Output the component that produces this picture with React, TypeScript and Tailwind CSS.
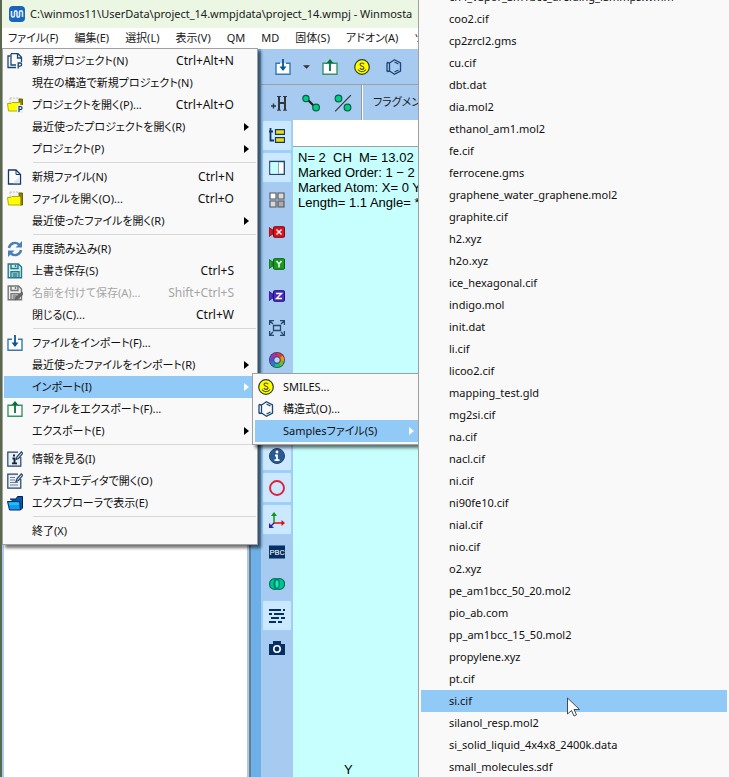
import { ReactNode } from "react"

interface MenuEntry {
  label: string
  shortcut?: string
  icon?: ReactNode
  submenu?: boolean
  disabled?: boolean
  active?: boolean
}

const FolderIcon = ({ badge }: { badge?: boolean }) => (
  <svg viewBox="0 0 16 16" className="size-4">
    <path d="M3 1h9v7H3z" fill="#f4f4f4" stroke="#aaa" strokeWidth=".7" strokeDasharray="2 1" />
    <path d="M12 2h3.500v12H13z" fill="#8a8200" stroke="#6b6400" />
    <path d="M.5 6.500H4L5 5.500h7.500l1 1V14H1.500z" fill="#ffff00" stroke="#b5aa00" />
    {badge && (
      <>
        <path d="M10 8h6v8h-6z" fill="#e8f0fa" />
        <path d="M12 15V9.500h1.500a1.500 1.500 0 0 1 0 3H12" fill="none" stroke="#153a70" strokeWidth="1.200" />
      </>
    )}
  </svg>
)

const NewProjectIcon = () => (
  <svg viewBox="0 0 16 16" className="size-4" fill="none" stroke="#1d4576" strokeWidth="1.300">
    <path d="M3.500 3H1v11.500h8" />
    <path d="M4 .700h7l3.500 3.500v5M4 .700V12h5M10.500 1v4h4" fill="#fff" />
    <path d="M11.200 15.500v-5.500h1.800a1.600 1.600 0 0 1 0 3.200h-1.800" />
  </svg>
)

const NewFileIcon = () => (
  <svg viewBox="0 0 16 16" className="size-4">
    <path d="M1.500 1H9l4.500 4.500V15h-12z" fill="#fff" stroke="#143968" strokeWidth="1.300" />
    <path d="M6 14.300h7V7z" fill="#dce6f2" />
    <path d="M9 1v4.500h4.500" fill="none" stroke="#143968" />
  </svg>
)

const ReloadIcon = () => (
  <svg viewBox="0 0 16 16" className="size-4">
    <path d="M2 7a6 6 0 0 1 10-3.500M14 9a6 6 0 0 1-10 3.500" fill="none" stroke="#4a80b5" strokeWidth="2.400" />
    <path d="M15 0v6.500H8.500zM1 16V9.500h6.500z" fill="#4a80b5" />
  </svg>
)

const SaveIcon = ({ edit }: { edit?: boolean }) => (
  <svg viewBox="0 0 16 16" className="size-4" fill="none" stroke={edit ? "#777" : "#247a87"} strokeWidth="1.400">
    <path d="M1.200 1h10.300l3 3v10.800H1.200z" fill={edit ? "#eee" : "#d3edef"} />
    <path d="M4 1v4.500h7V1M8.500 2v2M4 15V8.800h8V15M5.500 11h5M5.500 13h5" />
    {edit && <path d="m8 15 1-3 6-5 1.500 2-6 5z" fill="#666" stroke="#555" strokeWidth=".6" />}
  </svg>
)

const ImportIcon = () => (
  <svg viewBox="0 0 16 16" className="size-4" fill="none" strokeWidth="1.400">
    <path d="M5 4.200H1v11h14v-11h-4" stroke="#347bad" fill="#fff" />
    <path d="M8 0v10" stroke="#075799" strokeWidth="1.800" />
    <path d="M4.500 7.500h7L8 12z" fill="#075799" />
  </svg>
)

const ExportIcon = () => (
  <svg viewBox="0 0 16 16" className="size-4" fill="none" strokeWidth="1.400">
    <path d="M5 4.200H1v11h14v-11h-4" stroke="#379466" fill="#fff" />
    <path d="M8 12V3" stroke="#007437" strokeWidth="1.800" />
    <path d="M4 4.800h8L8 0z" fill="#007437" />
  </svg>
)

const NoteIcon = ({ info }: { info?: boolean }) => (
  <svg viewBox="0 0 16 16" className="size-4" fill="none" stroke="#254566" strokeWidth="1.200">
    <path d="M11 1.200H.800v14h13V6" fill="#e8eef4" />
    {info ? (
      <path d="M5.500 7.500h2v4.500M5 12.300h5M6 4.500h2" strokeWidth="1.800" stroke="#10243b" />
    ) : (
      <path d="M3 4.500h5M3 7h5M3 9.500h8M3 12h8" stroke="#6f8398" />
    )}
    <path d="m9 8.500 1-2.700L14.300.800l1.500 1.500L11.500 7.500z" fill="#d7e2ec" />
  </svg>
)

const ExplorerIcon = () => (
  <svg viewBox="0 0 16 16" className="size-4">
    <path d="M3 4h6l1.500-2.500h5V13l-2 2" fill="#0757a5" stroke="#001b61" />
    <path d="M.500 6.500h12l1 8.500H2.500z" fill="#1598e8" stroke="#00256c" />
    <path d="M2 7.500h10l.3 2.500H2.500z" fill="#18c3f5" />
  </svg>
)

const SmilesIcon = () => (
  <svg viewBox="0 0 16 16" className="size-4">
    <circle cx="8" cy="8" r="7.300" fill="#ffff00" stroke="#34412b" strokeWidth="1.200" />
    <path
      d="M10 5.200C9.400 3.500 6 3.600 6 5.500c0 2 4 1.400 4 3.500 0 1.800-3.500 1.800-4 0M4 10.500c2 3 6 3 8 0"
      fill="none"
      stroke="#4a4a10"
      strokeWidth="1.100"
    />
  </svg>
)

const StructureIcon = () => (
  <svg viewBox="0 0 16 16" className="size-4" fill="none" stroke="#1d4576" strokeWidth="1.300">
    <path d="M8.500.800 14.500 4v8l-6 3.200-5-3.200V4zM8.500 3l4 2M12.500 11l-4 2M1 3.500v9M3.500 4 1 3.500M3.500 12 1 12.500" />
  </svg>
)

const AddHydrogenIcon = () => (
  <svg viewBox="0 0 18 18" className="size-[18px]" fill="none" stroke="#303640">
    <path d="M1 12h5M3.500 9.500v5" strokeWidth="1.400" />
    <path d="M9 2.500v13.500M15 2.500v13.500M9 9h6" strokeWidth="2" />
    <path d="M7 2.500h4M13 2.500h4M7 16.200h4M13 16.200h4" />
  </svg>
)

const BondIcon = () => (
  <svg viewBox="0 0 16 16" className="size-[18px]" stroke="#075c45">
    <path d="m4 4 8 8" stroke="#222" strokeWidth="2" />
    <circle cx="3.500" cy="4" r="2.800" fill="#00cc84" />
    <circle cx="12.500" cy="12" r="3" fill="#00cc84" />
  </svg>
)

const CutBondIcon = () => (
  <svg viewBox="0 0 16 16" className="size-[18px]" stroke="#075c45">
    <path d="M15 1 1 15.500" stroke="#333" />
    <circle cx="4" cy="4" r="3" fill="#00cc84" />
    <circle cx="12" cy="12" r="3" fill="#00cc84" />
  </svg>
)

const TreeIcon = () => (
  <svg viewBox="0 0 16 16" className="size-4">
    <path d="M0 3.500h4M1.500 0v12.500H5" fill="none" stroke="#123763" strokeWidth="1.800" />
    <path d="M6.500 1.700h9v4.600h-9zM6.500 9.700h9v4.600h-9z" fill="#eddf16" stroke="#123763" strokeWidth="1.200" />
  </svg>
)

const PanelIcon = () => (
  <svg viewBox="0 0 16 16" className="size-4">
    <path d="M.800 1.500h14.500v12.800H.800z" fill="#fff" stroke="#214566" strokeWidth="1.300" />
    <path d="M1.500 2.300H9v11.200H1.500z" fill="#c6fffb" />
    <path d="M9.500 2v12" stroke="#8aa6be" />
  </svg>
)

const GridIcon = () => (
  <svg viewBox="0 0 16 16" className="size-4" stroke="#555" strokeWidth="1.100">
    <path d="M1 1h6v6H1z" fill="#fff" />
    <path d="M9 1h6v6H9zM1 9h6v6H1z" fill="#d9d9d9" />
    <path d="M9 9h6v6H9z" fill="#aaa" />
  </svg>
)

const AxisCamera = ({ color, dark, mark }: { color: string; dark: string; mark: string }) => (
  <svg viewBox="0 0 16 16" className="size-4">
    <path d="M0 3.500 4 6v4l-4 2.500z" fill={color} stroke={dark} strokeWidth=".7" />
    <rect x="4.500" y="2.700" width="11" height="10.600" rx="1" fill={color} stroke={dark} />
    <path d={mark} fill="none" stroke="#fff" strokeWidth="1.400" />
  </svg>
)

const FitIcon = () => (
  <svg viewBox="0 0 16 16" className="size-4" fill="none" stroke="#23476e" strokeWidth="1.300">
    <path d="M4.500 5.500h7v5h-7zM.600 5V.600H5M11 .600h4.400V5M15.400 11v4.400H11M5 15.400H.600V11M1 1l3 3M15 1l-3 3M15 15l-3-3M1 15l3-3" />
  </svg>
)

const ringColors = ["#ff3020", "#ff8a18", "#55c925", "#17bd78", "#277bd5", "#7441d2", "#bd2aa8"]

const ColorRingIcon = () => (
  <svg viewBox="0 0 16 16" className="size-4">
    <circle cx="8" cy="8" r="8" fill="#304365" />
    {ringColors.map((color, i) => (
      <circle
        key={color}
        cx="8"
        cy="8"
        r="5.400"
        fill="none"
        stroke={color}
        strokeWidth="3.600"
        pathLength="7"
        strokeDasharray="1 6"
        strokeDashoffset={-i}
        transform="rotate(-90 8 8)"
      />
    ))}
    <circle cx="8" cy="8" r="3.300" fill="#b8d4f4" stroke="#304365" />
  </svg>
)

const InfoIcon = () => (
  <svg viewBox="0 0 16 16" className="size-4">
    <circle cx="8" cy="8" r="7.500" fill="#285b94" stroke="#234266" />
    <circle cx="8" cy="4" r="1.400" fill="#fff" />
    <path d="M6 7.500h2v4.500M5.500 12.200h5" fill="none" stroke="#fff" strokeWidth="1.800" />
  </svg>
)

const CircleIcon = () => (
  <svg viewBox="0 0 16 16" className="size-4">
    <circle cx="8" cy="8" r="7" fill="none" stroke="#df2036" strokeWidth="1.900" />
  </svg>
)

const AxesIcon = () => (
  <svg viewBox="0 0 16 16" className="size-4" strokeWidth="1.500">
    <path d="M5 11V2" stroke="#129515" />
    <path d="M2 4h6L5 0z" fill="#129515" />
    <path d="M5 11h9" stroke="#e40b0b" />
    <path d="M12.500 8v6l3.500-3z" fill="#e40b0b" />
    <path d="m5 11-3.500 3.500" stroke="#3720a9" />
    <path d="M0 11v5h5z" fill="#3720a9" />
  </svg>
)

const PbcIcon = () => (
  <svg viewBox="0 0 16 16" className="size-4">
    <path d="M0 1.500h16v13H0z" fill="#052f63" />
    <text x="8" y="11" textAnchor="middle" fontSize="8" fontFamily="Roboto" fill="#fff">
      PBC
    </text>
  </svg>
)

const OverlapIcon = () => (
  <svg viewBox="0 0 16 16" className="size-4" stroke="#087060" strokeWidth="1.200">
    <rect x=".6" y="2.600" width="10.500" height="10.800" rx="5" fill="#00c786" />
    <rect x="5" y="2.600" width="10.500" height="10.800" rx="5" fill="#00c786" />
    <ellipse cx="8" cy="8" rx="2.300" ry="4.300" fill="#00edc5" />
  </svg>
)

const LinesIcon = () => (
  <svg viewBox="0 0 16 16" className="size-4" stroke="#052f63" strokeWidth="2">
    <path d="M0 2h12M14 2h2M0 6h3M5 6h10M2 10h8M12 10h4M0 14h7M9 14h4" />
  </svg>
)

const CameraIcon = () => (
  <svg viewBox="0 0 16 16" className="size-4">
    <path d="M0 4h4V1h8v3h4v11H0z" fill="#052f63" />
    <circle cx="8" cy="9" r="3.200" fill="none" stroke="#fff" strokeWidth="1.600" />
  </svg>
)

const fileMenu: MenuEntry[][] = [
  [
    { label: "新規プロジェクト(N)", shortcut: "Ctrl+Alt+N", icon: <NewProjectIcon /> },
    { label: "現在の構造で新規プロジェクト(N)" },
    { label: "プロジェクトを開く(P)...", shortcut: "Ctrl+Alt+O", icon: <FolderIcon badge /> },
    { label: "最近使ったプロジェクトを開く(R)", submenu: true },
    { label: "プロジェクト(P)", submenu: true },
  ],
  [
    { label: "新規ファイル(N)", shortcut: "Ctrl+N", icon: <NewFileIcon /> },
    { label: "ファイルを開く(O)...", shortcut: "Ctrl+O", icon: <FolderIcon /> },
    { label: "最近使ったファイルを開く(R)", submenu: true },
  ],
  [
    { label: "再度読み込み(R)", icon: <ReloadIcon /> },
    { label: "上書き保存(S)", shortcut: "Ctrl+S", icon: <SaveIcon /> },
    { label: "名前を付けて保存(A)...", shortcut: "Shift+Ctrl+S", icon: <SaveIcon edit />, disabled: true },
    { label: "閉じる(C)...", shortcut: "Ctrl+W" },
  ],
  [
    { label: "ファイルをインポート(F)...", icon: <ImportIcon /> },
    { label: "最近使ったファイルをインポート(R)", submenu: true },
    { label: "インポート(I)", submenu: true, active: true },
    { label: "ファイルをエクスポート(F)...", icon: <ExportIcon /> },
    { label: "エクスポート(E)", submenu: true },
  ],
  [
    { label: "情報を見る(I)", icon: <NoteIcon info /> },
    { label: "テキストエディタで開く(O)", icon: <NoteIcon /> },
    { label: "エクスプローラで表示(E)", icon: <ExplorerIcon /> },
  ],
  [{ label: "終了(X)" }],
]

const importMenu: MenuEntry[] = [
  { label: "SMILES...", icon: <SmilesIcon /> },
  { label: "構造式(O)...", icon: <StructureIcon /> },
  { label: "Samplesファイル(S)", submenu: true, active: true },
]

const samples = [
  "ch4_vapor_am1bcc_dreiding_lammps.wmm",
  "coo2.cif",
  "cp2zrcl2.gms",
  "cu.cif",
  "dbt.dat",
  "dia.mol2",
  "ethanol_am1.mol2",
  "fe.cif",
  "ferrocene.gms",
  "graphene_water_graphene.mol2",
  "graphite.cif",
  "h2.xyz",
  "h2o.xyz",
  "ice_hexagonal.cif",
  "indigo.mol",
  "init.dat",
  "li.cif",
  "licoo2.cif",
  "mapping_test.gld",
  "mg2si.cif",
  "na.cif",
  "nacl.cif",
  "ni.cif",
  "ni90fe10.cif",
  "nial.cif",
  "nio.cif",
  "o2.xyz",
  "pe_am1bcc_50_20.mol2",
  "pio_ab.com",
  "pp_am1bcc_15_50.mol2",
  "propylene.xyz",
  "pt.cif",
  "si.cif",
  "silanol_resp.mol2",
  "si_solid_liquid_4x4x8_2400k.data",
  "small_molecules.sdf",
]

const menuBar = ["ファイル(F)", "編集(E)", "選択(L)", "表示(V)", "QM", "MD", "固体(S)", "アドオン(A)", "ツ"]

const viewTools = [
  { name: "Tree", icon: <TreeIcon />, on: true },
  { name: "Panel", icon: <PanelIcon />, on: true },
  { name: "Tiles", icon: <GridIcon /> },
  { name: "View X", icon: <AxisCamera color="#d81420" dark="#7f0710" mark="m7.500 5.500 5 5m0-5-5 5" /> },
  { name: "View Y", icon: <AxisCamera color="#1b9a22" dark="#07600d" mark="m7.500 5 2.500 3 2.500-3M10 8v3.500" /> },
  { name: "View Z", icon: <AxisCamera color="#4b2bc2" dark="#23107a" mark="M7 5.500h5.500l-5 5H13" /> },
  { name: "Fit", icon: <FitIcon /> },
  { name: "Colors", icon: <ColorRingIcon /> },
  { name: "Style", icon: <CircleIcon /> },
  { name: "Labels", icon: <CircleIcon /> },
  { name: "Information", icon: <InfoIcon />, on: true },
  { name: "Marker", icon: <CircleIcon />, on: true },
  { name: "Axes", icon: <AxesIcon />, on: true },
  { name: "Periodic boundary", icon: <PbcIcon /> },
  { name: "Overlap", icon: <OverlapIcon /> },
  { name: "Depth", icon: <LinesIcon />, on: true },
  { name: "Capture", icon: <CameraIcon /> },
]

const MenuRow = ({ item }: { item: MenuEntry }) => (
  <button
    type="button"
    disabled={item.disabled}
    className={`flex h-[22px] w-full items-center whitespace-nowrap text-left ${
      item.active ? "bg-[#91c9f7]" : ""
    } ${item.disabled ? "text-[#a5a5a5]" : "text-[#101010]"}`}
  >
    <span className="ml-[3px] w-[25px] shrink-0">{item.icon}</span>
    <span className="grow">{item.label}</span>
    {item.shortcut && <span className="mr-[22px] text-xs">{item.shortcut}</span>}
    {item.submenu && (
      <svg viewBox="0 0 5 8" className="mr-[7px] h-2 w-[5px] shrink-0">
        <path d="M0 0v8l5-4z" fill={item.active ? "#fff" : "#000"} />
      </svg>
    )}
  </button>
)

const FileMenu = () => (
  <div className="absolute top-12 left-0 z-10 w-64 border border-[#a0a0a0] bg-[#f9f9f9] px-px pt-px pb-[2px] shadow-[3px_3px_3px_rgba(0,0,0,0.55)]">
    {fileMenu.map((group, i) => (
      <div key={i}>
        {i > 0 && <hr className="mt-[2px] mb-[3px] ml-[29px] border-[#d7d7d7]" />}
        {group.map((item) => (
          <MenuRow key={item.label} item={item} />
        ))}
      </div>
    ))}
  </div>
)

const ImportMenu = () => (
  <div className="absolute top-[373px] left-[250px] z-20 w-[172px] border border-[#a0a0a0] bg-[#f9f9f9] p-[2px] shadow-[3px_3px_3px_rgba(0,0,0,0.55)]">
    {importMenu.map((item) => (
      <MenuRow key={item.label} item={item} />
    ))}
  </div>
)

const SamplesMenu = () => (
  <div className="absolute inset-y-0 right-0 left-[416px] z-30 overflow-hidden border-l border-[#a0a0a0] bg-[#f9f9f9] pr-[2px] pl-[2px]">
    <div className="-mt-[14px]">
      {samples.map((name) => (
        <button
          key={name}
          type="button"
          className={`block h-[22px] w-full pl-7 text-left leading-[22px] text-[#101010] ${
            name === "si.cif" ? "bg-[#91c9f7]" : ""
          }`}
        >
          {name}
        </button>
      ))}
    </div>
  </div>
)

const Pointer = () => (
  <svg viewBox="0 0 14 20" className="absolute top-[697px] left-[565px] z-40 h-5 w-[14px]">
    <path d="M.500 1v16l4-3.500 2.500 5.500 2.500-1.200L7 12.500h5.500z" fill="#fff" stroke="#444b55" />
  </svg>
)

const ToolButton = ({ name, children }: { name: string; children: ReactNode }) => (
  <button type="button" aria-label={name} className="flex size-8 shrink-0 items-center justify-center">
    {children}
  </button>
)

export default function App() {
  return (
    <div className="relative flex min-h-screen flex-col overflow-hidden border-l-2 border-[#59684f] bg-white font-['Noto_Sans','Noto_Sans_CJK_JP',sans-serif] text-[11px] text-[#202020]">
      <header className="flex h-7 items-center bg-[#ebf6e3] pl-[7px] whitespace-nowrap">
        <svg viewBox="0 0 16 16" className="mr-[5px] size-4 shrink-0">
          <rect width="16" height="16" rx="4" fill="#1965bd" />
          <path
            d="M2.500 5v4.500c0 2 3 2 3 0V6c0-1.500 2.500-1.500 2.500 0v4c0 1.500 2.500 1.500 2.500 0V6c0-1.500 3-1.500 3 0v5"
            fill="none"
            stroke="#d8ecff"
            strokeWidth="1.600"
          />
        </svg>
        C:\winmos11\UserData\project_14.wmpjdata\project_14.wmpj - Winmosta
      </header>
      <nav className="flex h-[21px] shrink-0 items-center gap-4 pl-[6px] whitespace-nowrap [font-feature-settings:'palt']">
        {menuBar.map((label) => (
          <button key={label} type="button">
            {label}
          </button>
        ))}
      </nav>

      <div className="flex grow">
        <aside className="flex w-[249px] shrink-0 border-x-2 border-r-[#6f7d88] border-l-[#a6caf0]">
          <div className="grow border-r-2 border-[#a6caf0] bg-white" />
        </aside>
        <div className="w-[10px] shrink-0 bg-[#6db0e8]" />
        <main className="flex min-w-0 grow flex-col">
          <div className="flex h-9 items-center border-b border-[#a0a0a0] bg-[#a6caf0] pl-[6px]">
            <ToolButton name="Import">
              <ImportIcon />
            </ToolButton>
            <button type="button" aria-label="Import options" className="px-1">
              <svg viewBox="0 0 8 4" className="h-1 w-[7px]">
                <path d="M0 0h8L4 4z" fill="#333" />
              </svg>
            </button>
            <ToolButton name="Export">
              <ExportIcon />
            </ToolButton>
            <ToolButton name="SMILES">
              <SmilesIcon />
            </ToolButton>
            <ToolButton name="Structure">
              <StructureIcon />
            </ToolButton>
            <div className="ml-2 h-4 w-4 border-2 border-[#23476e]" />
          </div>
          <div className="flex h-[35px] items-center bg-[#a6caf0] pl-[2px]">
            <ToolButton name="Add hydrogen">
              <AddHydrogenIcon />
            </ToolButton>
            <ToolButton name="Bond">
              <BondIcon />
            </ToolButton>
            <ToolButton name="Cut bond">
              <CutBondIcon />
            </ToolButton>
            <div className="ml-[2px] h-full w-[2px] border-l border-[#8d9caf] bg-white" />
            <button type="button" className="pl-[10px] whitespace-nowrap [font-feature-settings:'palt']">
              フラグメント
            </button>
          </div>
          <div className="flex grow">
            <div className="flex w-8 shrink-0 flex-col bg-[#a6caf0] pl-px">
              {viewTools.map((tool) => (
                <button
                  key={tool.name}
                  type="button"
                  aria-label={tool.name}
                  className={`mb-px flex h-[31px] w-[30px] items-center justify-center rounded-xs border ${
                    tool.on ? "border-[#99d1ff] bg-[#cce8ff]" : "border-transparent"
                  }`}
                >
                  {tool.icon}
                </button>
              ))}
            </div>
            <div className="flex min-w-0 grow flex-col">
              <div className="h-[27px] shrink-0 border-b border-[#a0a0a0] bg-white" />
              <div className="flex grow flex-col bg-[#c6fffd] pt-[3px] pl-[5px] font-['Liberation_Sans',sans-serif] text-[13px] leading-[15px] whitespace-pre text-black">
                <div>N= 2  CH  M= 13.02</div>
                <div>Marked Order: 1 − 2</div>
                <div>Marked Atom: X= 0 Y</div>
                <div>Length= 1.1 Angle= *</div>
                <div className="mt-auto pl-[46px]">Y</div>
              </div>
            </div>
          </div>
        </main>
      </div>

      <div className="[font-feature-settings:'palt']">
        <FileMenu />
        <ImportMenu />
        <SamplesMenu />
      </div>
      <Pointer />
    </div>
  )
}
